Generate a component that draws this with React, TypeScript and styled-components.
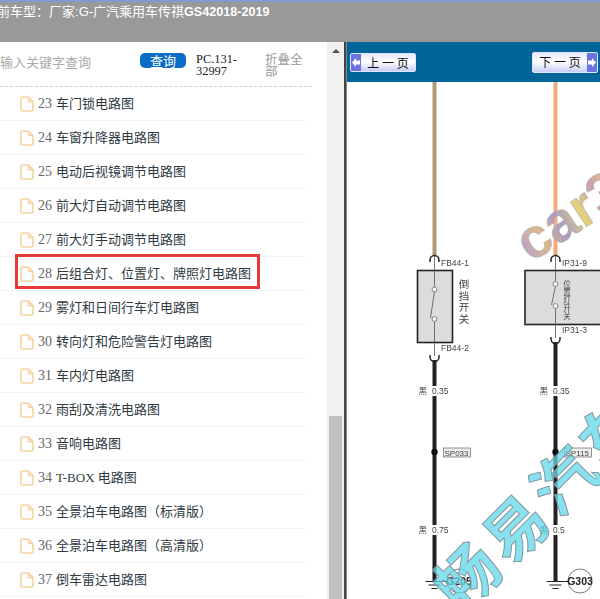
import React from "react";
import styled, { createGlobalStyle } from "styled-components";

const Global = createGlobalStyle`
  html, body { margin: 0; padding: 0; background: #fff; overflow: hidden; }
  #root { width: 600px; height: 599px; overflow: hidden; }
`;
const Page = styled.div`
  width: 600px; height: 599px; display: flex; flex-direction: column; overflow: hidden;
  font-family: "Liberation Serif", "Noto Sans CJK SC", serif;
`;
const TopBar = styled.header`
  height: 40px; flex: none; background: #999; border-top: 2px solid #7f9bd0; overflow: hidden;
  color: #fff; font: 400 13px/20px "Liberation Sans", "Noto Sans CJK SC", sans-serif;
  white-space: nowrap;
`;
const TopText = styled.div`
  margin-left: -3px; display: flex; gap: 0;
  b { font-weight: 700; font-size: 12.6px; }
`;
const Main = styled.div`flex: 1; display: flex; min-height: 0;`;
const Side = styled.section`width: 327px; flex: none; overflow: hidden; background: #fff;`;
const Search = styled.div`
  height: 45px; width: 312px; box-sizing: border-box; border-bottom: 1px dashed #ccc;
  display: flex; align-items: flex-start; padding-top: 11px;
`;
const Placeholder = styled.div`
  width: 140px; flex: none; color: #aaa; font: 13px/18px "Noto Sans CJK SC", sans-serif;
`;
const QueryButton = styled.button`
  width: 46px; height: 15px; flex: none; padding: 0; border: 0; border-radius: 5px; background: #0a6cc4; color: #fff;
  font: 13px/15px "Noto Sans CJK SC", sans-serif;
`;
const Version = styled.div`
  width: 52px; margin-left: 10px; flex: none; color: #222; font: 12.4px/12px "Liberation Serif", serif;
`;
const Fold = styled.div`
  width: 39px; margin-left: 17px; flex: none; color: #999; font: 12.5px/12px "Noto Sans CJK SC", sans-serif;
`;
const List = styled.ul`margin: 0; padding: 0; list-style: none;`;
const Row = styled.li`
  position: relative; height: 33px; width: 286px; border-bottom: 1px solid #f4f4f4;
  display: flex; align-items: center; padding-left: 20px;
  color: #2f3a44; font-size: 13px; white-space: nowrap;
`;
const FileIcon = styled.svg`width: 14px; height: 16px; flex: none; margin-right: 4px;`;
const Num = styled.span`
  color: #666; font: 14px/18px "Liberation Serif", serif; margin-right: 4px;
`;
const Title = styled.span`font: 13px/18px "Liberation Serif", "Noto Sans CJK SC", sans-serif;`;
const Highlight = styled.span`
  position: absolute; left: 15px; top: -3px; width: 239px; height: 29px; border: 3px solid #e63a3a;
`;
const Track = styled.div`
  width: 17px; flex: none; background: #f1f1f1; display: flex; flex-direction: column; align-items: center;
`;
const Arrow = styled.div`
  margin-top: 7px; width: 0; height: 0; border-left: 4px solid transparent; border-right: 4px solid transparent;
  border-bottom: 4px solid #505050;
`;
const Thumb = styled.div`margin-top: 363px; width: 13px; flex: 1; background: #c1c1c1;`;
const Divider = styled.div`width: 3px; flex: none; background: linear-gradient(90deg, #444 0 2px, #888 2px);`;
const Viewer = styled.section`flex: 1; min-width: 0; display: flex; flex-direction: column;`;
const NavBand = styled.nav`
  height: 40px; flex: none; background: #006699; display: flex; align-items: center;
  justify-content: space-between; padding: 1px 2px 0 3px; box-sizing: border-box;
`;
const PageButton = styled.button<{ $next?: boolean }>`
  width: 66px; height: ${p => (p.$next ? 21 : 19)}px; padding: 0; border: 1px solid #dfe6ff; border-radius: 2px;
  display: flex; flex-direction: ${p => (p.$next ? "row-reverse" : "row")}; align-items: stretch;
  background: linear-gradient(180deg, #e6e8ff, #fff 45%, #c9cdf6); color: #111;
  font: 12px/17px "Noto Sans CJK SC", sans-serif; overflow: hidden;
`;
const ArrowCap = styled.span`
  width: 10px; flex: none; background: #6a74e0; display: flex; align-items: center; justify-content: center;
`;
const ButtonLabel = styled.span`flex: 1; text-align: center; white-space: pre;`;
const Drawing = styled.svg`flex: 1; width: 253px; display: block; filter: blur(0.25px);`;

const items = [
  ["23", "车门锁电路图"], ["24", "车窗升降器电路图"], ["25", "电动后视镜调节电路图"],
  ["26", "前大灯自动调节电路图"], ["27", "前大灯手动调节电路图"], ["28", "后组合灯、位置灯、牌照灯电路图"],
  ["29", "雾灯和日间行车灯电路图"], ["30", "转向灯和危险警告灯电路图"], ["31", "车内灯电路图"],
  ["32", "雨刮及清洗电路图"], ["33", "音响电路图"], ["34", "T-BOX 电路图"],
  ["35", "全景泊车电路图（标清版）"], ["36", "全景泊车电路图（高清版）"], ["37", "倒车雷达电路图"],
];

const Doc = () => (
  <FileIcon viewBox="0 0 14 16" fill="none" stroke="#f5d3a4" strokeWidth="1.6">
    <path d="M1 2.2 Q1 1 2.2 1 H8.5 L13 5.5 V13.8 Q13 15 11.8 15 H2.2 Q1 15 1 13.8 Z" />
    <path d="M8.5 1 V5.5 H13" />
  </FileIcon>
);

const lbl = { fontFamily: '"Liberation Sans","Noto Sans CJK SC",sans-serif', fill: "#444" };

/* coordinates below are page x minus 347, page y minus 82 */
const Circuit = ({ x, bottom, wire, boxX, boxW, boxH, l1, l2, sp, w1, w2, g, contacts }: {
  x: number; bottom: number; wire: string; boxX: number; boxW: number; boxH: number;
  l1: string; l2: string; sp: string; w1: string; w2: string; g: string; contacts: number[];
}) => (
  <g>
    <rect x={x - 2} y={0} width={4} height={174} fill={wire} />
    <path d={`M${x - 4.5} 180 v-2 a4.5 4.5 0 0 1 9 0 v2`} fill="none" stroke="#222" strokeWidth="1.5" />
    <text x={x + 6.5} y={184} fontSize="8.5" {...lbl}>{l1}</text>
    <rect x={boxX} y={188.5} width={boxW} height={boxH} fill="#dcdcdc" stroke="#222" strokeWidth="1.6" />
    <line x1={x} y1={172} x2={x} y2={contacts[0]} stroke="#555" strokeWidth="0.8" />
    <line x1={x} y1={contacts[1]} x2={x} y2={bottom + 6} stroke="#555" strokeWidth="0.8" />
    <line x1={x} y1={contacts[0] + 2} x2={x - 4} y2={contacts[1] - 1} stroke="#555" strokeWidth="0.8" />
    <circle cx={x} cy={contacts[0]} r="2.4" fill="#fff" stroke="#555" strokeWidth="0.7" />
    <circle cx={x} cy={contacts[1]} r="2.4" fill="#fff" stroke="#555" strokeWidth="0.7" />
    <text x={x + 6.5} y={bottom + 1} fontSize="8.5" {...lbl}>{l2}</text>
    <path d={`M${x - 4.5} ${bottom + 5} v2 a4.5 4.5 0 0 0 9 0 v-2`} fill="none" stroke="#222" strokeWidth="1.5" />
    <rect x={x - 2} y={bottom + 10} width={4} height={499 - bottom - 10} fill="#222" />
    <rect x={x - 3} y={304} width={19} height={10} fill="#fff" />
    <text x={x - 16} y={312} fontSize="8.5" {...lbl}>黑</text>
    <text x={x - 2.5} y={312} fontSize="8.5" {...lbl}>{w1}</text>
    <circle cx={x} cy={370} r="3.2" fill="#111" />
    <rect x={x + 9} y={366} width={27} height={9} fill="#eee" stroke="#666" strokeWidth="0.7" />
    <text x={x + 10} y={373.5} fontSize="8" {...lbl}>{sp}</text>
    <rect x={x - 3} y={443} width={19} height={10} fill="#fff" />
    <text x={x - 16} y={451} fontSize="8.5" {...lbl}>黑</text>
    <text x={x - 2.5} y={451} fontSize="8.5" {...lbl}>{w2}</text>
    <path d={`M${x - 9} 499.5 h18 M${x - 6} 503 h12 M${x - 3} 506.5 h6`} stroke="#222" strokeWidth="1.2" />
    <line x1={x + 9} y1={499.5} x2={x + 13} y2={499.5} stroke="#222" strokeWidth="1" />
    <circle cx={x + 24.5} cy={499} r="12" fill="#fff" stroke="#444" strokeWidth="0.7" />
    <text x={x + 24.5} y={503} fontSize="10.5" fontWeight="700" textAnchor="middle" fontFamily='"Liberation Sans",sans-serif' fill="#222">{g}</text>
  </g>
);

export default function App() {
  return (
    <Page>
      <Global />
      <TopBar>
        <TopText>
          <span>前车型：</span>
          <span>厂家:G-广汽乘用车传祺<b>GS42018-2019</b></span>
        </TopText>
      </TopBar>
      <Main>
        <Side>
          <Search>
            <Placeholder>输入关键字查询</Placeholder>
            <QueryButton>查询</QueryButton>
            <Version>PC.131-32997</Version>
            <Fold>折叠全部</Fold>
          </Search>
          <List>
            {items.map(([n, t]) => (
              <Row key={n}>
                <Doc />
                <Num>{n}</Num>
                <Title>{t}</Title>
                {n === "28" && <Highlight />}
              </Row>
            ))}
          </List>
        </Side>
        <Track><Arrow /><Thumb /></Track>
        <Divider />
        <Viewer>
          <NavBand>
            <PageButton>
              <ArrowCap>
                <svg width="8" height="9" viewBox="0 0 8 9"><path d="M0 4.5 4 0v2.5h4v4H4V9z" fill="#fff" /></svg>
              </ArrowCap>
              <ButtonLabel>上 一 页</ButtonLabel>
            </PageButton>
            <PageButton $next>
              <ArrowCap>
                <svg width="8" height="9" viewBox="0 0 8 9"><path d="M8 4.5 4 0v2.5H0v4h4V9z" fill="#fff" /></svg>
              </ArrowCap>
              <ButtonLabel>下 一 页</ButtonLabel>
            </PageButton>
          </NavBand>
          <Drawing viewBox="0 0 253 517" preserveAspectRatio="xMinYMin slice">
            <defs>
              <linearGradient id="carGrad" x1="0" y1="0" x2="1" y2="0">
                <stop offset="0" stopColor="#b9a3c9" />
                <stop offset="0.2" stopColor="#d9b98a" />
                <stop offset="0.4" stopColor="#a79bc4" />
                <stop offset="0.6" stopColor="#e3d27c" />
                <stop offset="0.8" stopColor="#c9a0b0" />
                <stop offset="1" stopColor="#e8c77a" />
              </linearGradient>
            </defs>
            <Circuit x={87.5} bottom={268} wire="#b09a75" boxX={70.5} boxW={35} boxH={72}
              l1="FB44-1" l2="FB44-2" sp="SP033" w1="0.35" w2="0.75" g="G205" contacts={[207.5, 237]} />
            <Circuit x={208.5} bottom={250} wire="#f2aa7c" boxX={178} boxW={80} boxH={54}
              l1="IP31-9" l2="IP31-3" sp="SP115" w1="0.35" w2="0.5" g="G303" contacts={[202, 224]} />
            <text x="117" y="197" fontSize="10.5" letterSpacing="1" fill="#444" writingMode="vertical-rl"
              fontFamily='"Noto Sans CJK SC",sans-serif'>倒挡开关</text>
            <text x="220" y="198" fontSize="7.5" letterSpacing="0.7" fill="#444" writingMode="vertical-rl"
              fontFamily='"Noto Sans CJK SC",sans-serif'>位置灯开关</text>
            <text x="184" y="181" fontSize="56" fontWeight="700" fontFamily='"Liberation Sans",sans-serif'
              fill="url(#carGrad)" stroke="#b5b0b0" strokeWidth="0.5" transform="rotate(-33 184 181)">car3</text>
            <text x="115" y="533" fontSize="62" fontWeight="700" fontFamily='"Noto Sans CJK SC",sans-serif'
              fill="#62d6e8" fillOpacity="0.75" stroke="#7f9aa0" strokeWidth="1" transform="rotate(-45 115 533)" letterSpacing="6">畅易汽车</text>
          </Drawing>
        </Viewer>
      </Main>
    </Page>
  );
}
